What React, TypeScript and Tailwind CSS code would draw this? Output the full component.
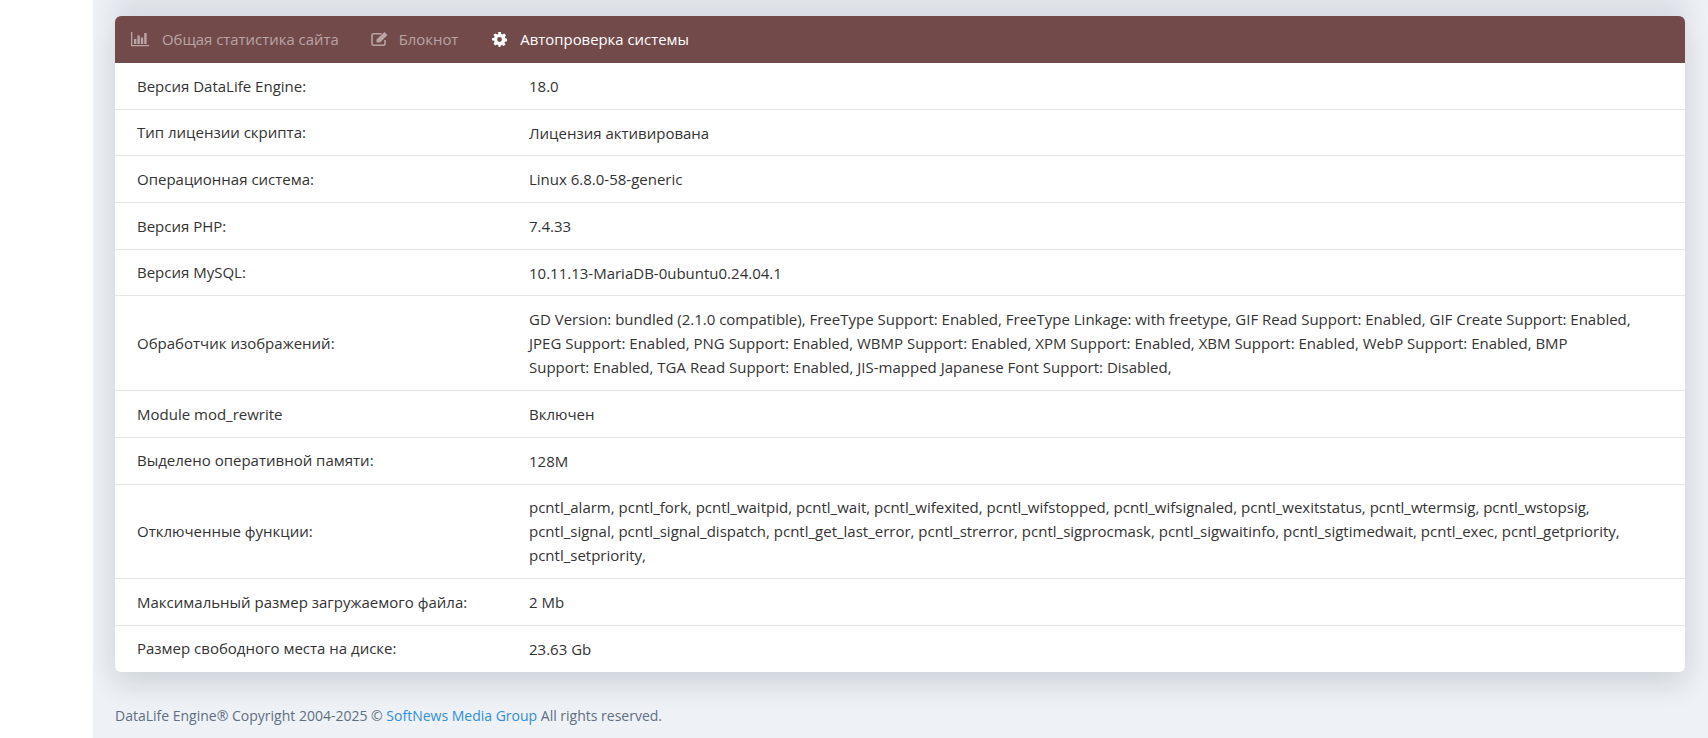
interface Row {
  label: string;
  value: string;
}

const rows: Row[] = [
  { label: 'Версия DataLife Engine:', value: '18.0' },
  { label: 'Тип лицензии скрипта:', value: 'Лицензия активирована' },
  { label: 'Операционная система:', value: 'Linux 6.8.0-58-generic' },
  { label: 'Версия PHP:', value: '7.4.33' },
  { label: 'Версия MySQL:', value: '10.11.13-MariaDB-0ubuntu0.24.04.1' },
  {
    label: 'Обработчик изображений:',
    value:
      'GD Version: bundled (2.1.0 compatible), FreeType Support: Enabled, FreeType Linkage: with freetype, GIF Read Support: Enabled, GIF Create Support: Enabled, JPEG Support: Enabled, PNG Support: Enabled, WBMP Support: Enabled, XPM Support: Enabled, XBM Support: Enabled, WebP Support: Enabled, BMP\nSupport: Enabled, TGA Read Support: Enabled, JIS-mapped Japanese Font Support: Disabled,',
  },
  { label: 'Module mod_rewrite', value: 'Включен' },
  { label: 'Выделено оперативной памяти:', value: '128M' },
  {
    label: 'Отключенные функции:',
    value:
      'pcntl_alarm, pcntl_fork, pcntl_waitpid, pcntl_wait, pcntl_wifexited, pcntl_wifstopped, pcntl_wifsignaled, pcntl_wexitstatus, pcntl_wtermsig, pcntl_wstopsig, pcntl_signal, pcntl_signal_dispatch, pcntl_get_last_error, pcntl_strerror, pcntl_sigprocmask, pcntl_sigwaitinfo, pcntl_sigtimedwait, pcntl_exec, pcntl_getpriority, pcntl_setpriority,',
  },
  { label: 'Максимальный размер загружаемого файла:', value: '2 Mb' },
  { label: 'Размер свободного места на диске:', value: '23.63 Gb' },
];

const BarsIcon = () => (
  <svg viewBox="0 0 18 16" className="w-[18px] h-4" fill="currentColor">
    <path d="M0 1h1.3v13H18v1.3H0z" />
    <path d="M3 8h2.4v5H3zM6.4 4.5h2.4V13H6.4zM9.8 6.5h2.4V13H9.8zM13.2 2h2.4v11h-2.4z" />
  </svg>
);

const NoteIcon = () => (
  <svg viewBox="0 0 18 16" className="w-[18px] h-4" fill="currentColor">
    <path
      d="M10.5 2.8H2.5A1.5 1.5 0 0 0 1 4.3v8.4a1.5 1.5 0 0 0 1.5 1.5h10a1.5 1.5 0 0 0 1.5-1.5V9"
      fill="none"
      stroke="currentColor"
      strokeWidth="1.6"
    />
    <path d="M5.5 8.5 13.5 1 16.5 4 9 11.5H5.5z" />
  </svg>
);

const CogIcon = () => (
  <svg viewBox="0 0 16 16" className="w-[15px] h-[15px]" fill="currentColor">
    <path
      fillRule="evenodd"
      d="M6.6 0h2.8l.4 2.2 1.3.55L13 1.5l2 2-1.25 1.9.55 1.3L16 7.1v2.8l-2.2.4-.55 1.3L14.5 13l-2 2-1.9-1.25-1.3.55L8.9 16H7.1l-.4-2.2-1.3-.55L3.5 14.5l-2-2 1.25-1.9-.55-1.3L0 8.9V6.6l2.2-.4.55-1.3L1.5 3l2-1.5 1.9 1.25 1.3-.55zM8 5.4a2.6 2.6 0 1 0 0 5.2 2.6 2.6 0 0 0 0-5.2z"
    />
  </svg>
);

const App = () => {
  return (
    <div className="h-[738px] overflow-hidden flex bg-[#eef1f6] font-['Open_Sans',sans-serif] text-[15px] text-[#333]">
      <aside className="relative z-10 w-[93px] shrink-0 bg-white" />
      <main className="flex-1 min-w-0 pl-[22px] pr-[23px]">
        <div className="h-2 -mt-2 mb-4 rounded-b-[6px] bg-white shadow-[0_10px_30px_rgba(20,35,45,0.3)]" />
        <section className="rounded-[6px] bg-white shadow-[0_10px_30px_rgba(20,35,45,0.16)]">
          <nav className="h-[47px] flex items-center rounded-t-[6px] bg-[#734a4a] pl-4 text-[14.9px]">
            <div className="flex items-center text-white/50">
              <BarsIcon />
              <span className="ml-[13px]">Общая статистика сайта</span>
            </div>
            <div className="flex items-center text-white/50 ml-8">
              <NoteIcon />
              <span className="ml-[10px]">Блокнот</span>
            </div>
            <div className="flex items-center text-white ml-[34px]">
              <CogIcon />
              <span className="ml-[13px]">Автопроверка системы</span>
            </div>
          </nav>
          {rows.map((row, i) => (
            <div
              key={row.label}
              className={`flex items-center ${i > 0 ? 'border-t border-[#e3e7ea]' : ''}`}
            >
              <div className="w-[414px] shrink-0 pl-[22px] pr-5">{row.label}</div>
              <div className="flex-1 min-w-0 py-[10.85px] pr-[30px] leading-6 whitespace-pre-line">{row.value}</div>
            </div>
          ))}
        </section>
        <footer className="mt-[33px] text-[14px] text-[#5f6f81]">
          DataLife Engine® Copyright 2004-2025 © <span className="text-[#2f8fd8]">SoftNews Media Group</span> All rights reserved.
        </footer>
      </main>
    </div>
  );
};

export default App;
